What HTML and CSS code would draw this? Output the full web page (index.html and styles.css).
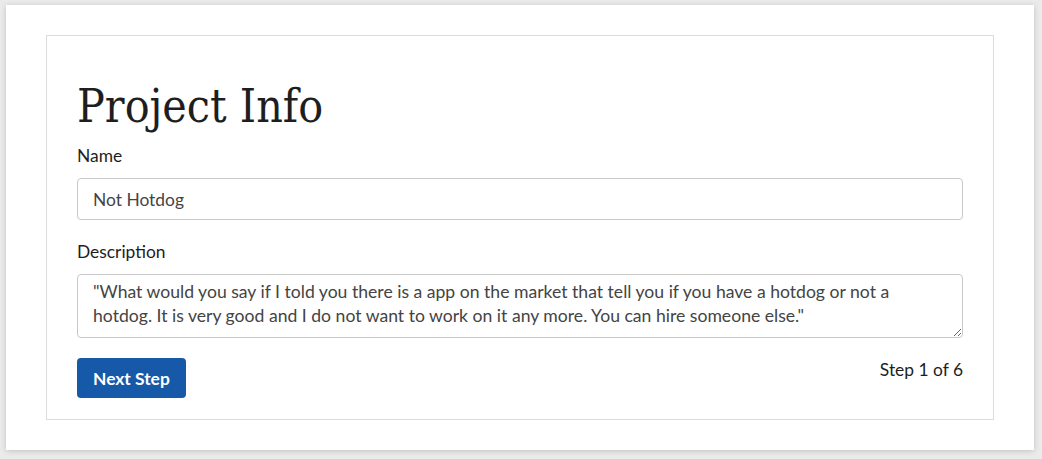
FILE: index.html
```html
<!DOCTYPE html>
<html lang="en">
<head>
<meta charset="utf-8">
<title>Project Info</title>
<link rel="stylesheet" href="styles.css">
</head>
<body>
<div class="panel">
  <form class="card">
    <h1 class="title">Project Info</h1>
    <div class="field">
      <label class="label" for="name">Name</label>
      <input class="input" id="name" type="text" value="Not Hotdog">
    </div>
    <div class="field">
      <label class="label" for="desc">Description</label>
      <textarea class="input textarea" id="desc">"What would you say if I told you there is a app on the market that tell you if you have a hotdog or not a hotdog. It is very good and I do not want to work on it any more. You can hire someone else."</textarea>
    </div>
    <div class="actions">
      <button class="btn" type="button">Next Step</button>
      <span class="step">Step 1 of 6</span>
    </div>
  </form>
</div>
</body>
</html>
```

FILE: styles.css
```css
* { box-sizing: border-box; }
html, body { margin: 0; height: 100%; }
body {
  background: #ebebeb;
  padding: 5px 8px 0 6px;
  font-family: Lato, "Open Sans", sans-serif;
  color: #222;
}
.panel {
  background: #fff;
  padding: 30px 40px;
  box-shadow: 0 1px 6px rgba(0, 0, 0, 0.18);
}
.card {
  border: 1px solid #dcdcdc;
  padding: 30px 30px 21px;
  margin: 0;
}
.title {
  font-family: "DejaVu Serif Condensed", "DejaVu Serif", "Liberation Serif", serif;
  font-weight: normal;
  font-size: 46px;
  line-height: 56px;
  margin: 12px 0 10px;
  color: #1e1e1e;
}
.field { margin-bottom: 20px; }
.label {
  display: block;
  font-size: 17.4px;
  line-height: 24px;
  margin-bottom: 10px;
  color: #1e1e1e;
}
.input {
  display: block;
  width: 100%;
  height: 42px;
  border: 1px solid #c8c8c8;
  border-radius: 4px;
  padding: 8px 15px;
  font-family: Lato, "Open Sans", sans-serif;
  font-size: 17.4px;
  line-height: 24px;
  color: #444;
  background: #fff;
  margin: 0;
}
.textarea {
  height: 64px;
  padding: 5px 30px 5px 15px;
  font-size: 17.6px;
  resize: vertical;
  overflow: hidden;
}
.actions {
  display: flex;
  justify-content: space-between;
  align-items: flex-start;
}
.btn {
  background: #1659a8;
  color: #fff;
  border: none;
  border-radius: 4px;
  height: 40px;
  padding: 0 16px;
  font-family: Lato, "Open Sans", sans-serif;
  font-weight: bold;
  font-size: 17.4px;
}
.step {
  font-size: 17.4px;
  line-height: 24px;
  color: #1e1e1e;
}
```
